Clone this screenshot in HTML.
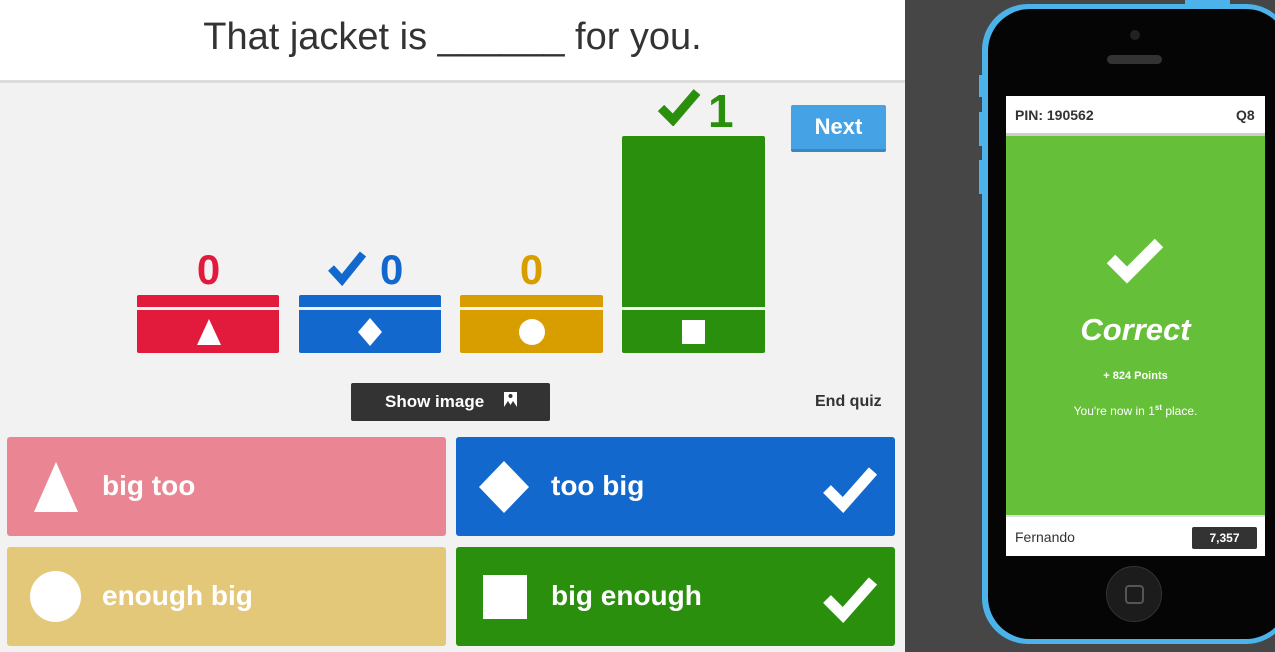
<!DOCTYPE html>
<html><head><meta charset="utf-8"><style>
*{margin:0;padding:0;box-sizing:border-box}
body{width:1275px;height:652px;overflow:hidden;position:relative;background:#f2f2f2;font-family:"Liberation Sans",sans-serif}
.a{position:absolute}
.num{position:absolute;font-weight:bold;font-size:42px;text-align:center;width:143px;top:246px}
.card{position:absolute;border-radius:3px;color:#fff;font-size:28px;font-weight:bold}
.card span{position:absolute;left:95px;top:33px}
</style></head><body>
<div class="a" style="left:0;top:0;width:905px;height:83px;background:#fff;border-bottom:3px solid #ddd"></div>
<div class="a" style="left:0;top:16px;width:905px;text-align:center;font-size:38px;color:#333">That jacket is ______ for you.</div>

<div class="a" style="left:137px;top:295px;width:142px;height:12px;background:#e21b3c;border-radius:2px 2px 0 0"></div>
<div class="a" style="left:137px;top:310px;width:142px;height:43px;background:#e21b3c;border-radius:0 0 2px 2px"></div>
<svg class="a" style="left:197px;top:319px" width="24" height="26"><polygon points="12,0 24,26 0,26" fill="#fff"/></svg>
<div class="num" style="left:137px;color:#e21b3c">0</div>

<div class="a" style="left:299px;top:295px;width:142px;height:12px;background:#1368ce;border-radius:2px 2px 0 0"></div>
<div class="a" style="left:299px;top:310px;width:142px;height:43px;background:#1368ce;border-radius:0 0 2px 2px"></div>
<svg class="a" style="left:358px;top:318px" width="24" height="28"><polygon points="12,0 24,14 12,28 0,14" fill="#fff"/></svg>
<div class="a" style="left:380px;top:246px;font-size:42px;font-weight:bold;color:#1368ce">0</div>
<svg class="a" style="left:327px;top:250px" width="42" height="36"><path d="M4,18 L15,30 L36,4" stroke="#1368ce" stroke-width="8" fill="none"/></svg>

<div class="a" style="left:460px;top:295px;width:143px;height:12px;background:#d89e00;border-radius:2px 2px 0 0"></div>
<div class="a" style="left:460px;top:310px;width:143px;height:43px;background:#d89e00;border-radius:0 0 2px 2px"></div>
<div class="a" style="left:519px;top:319px;width:26px;height:26px;border-radius:50%;background:#fff"></div>
<div class="num" style="left:460px;color:#d89e00">0</div>

<div class="a" style="left:622px;top:136px;width:143px;height:171px;background:#2b8f0e;border-radius:2px 2px 0 0"></div>
<div class="a" style="left:622px;top:310px;width:143px;height:43px;background:#2b8f0e;border-radius:0 0 2px 2px"></div>
<div class="a" style="left:682px;top:320px;width:23px;height:24px;background:#fff"></div>
<div class="a" style="left:708px;top:84px;font-size:46px;font-weight:bold;color:#2b8f0e">1</div>
<svg class="a" style="left:657px;top:88px" width="46" height="38"><path d="M4,20 L16,32 L40,4" stroke="#2b8f0e" stroke-width="9" fill="none"/></svg>

<div class="a" style="left:791px;top:105px;width:95px;height:47px;background:#45a3e5;border-bottom:3px solid #3a86bd;border-radius:2px;color:#fff;font-weight:bold;font-size:22px;text-align:center;line-height:44px">Next</div>

<div class="a" style="left:351px;top:383px;width:199px;height:38px;background:#333;border-radius:2px;color:#fff;font-weight:bold;font-size:17px;line-height:38px;padding-left:34px">Show image</div>
<svg class="a" style="left:504px;top:392px" width="13" height="15"><path d="M0,0 H13 V15 L9,9 L6.5,13 L4,9 L0,15 Z" fill="#fff"/><circle cx="6.5" cy="4" r="2" fill="#333"/></svg>
<div class="a" style="left:815px;top:393px;font-size:16px;font-weight:bold;color:#333">End quiz</div>

<div class="card" style="left:7px;top:437px;width:439px;height:99px;background:#ea8694"><svg class="a" style="left:24px;top:25px" width="50" height="50"><polygon points="25,0 47,50 3,50" fill="#fff"/></svg><span>big too</span></div>
<div class="card" style="left:456px;top:437px;width:439px;height:99px;background:#1368ce"><svg class="a" style="left:20px;top:22px" width="56" height="56"><polygon points="28,2 53,28 28,54 3,28" fill="#fff"/></svg><span>too big</span><svg class="a" style="left:365px;top:28px" width="60" height="48"><path d="M6,24 L22,40 L52,6" stroke="#fff" stroke-width="11" fill="none"/></svg></div>
<div class="card" style="left:7px;top:547px;width:439px;height:99px;background:#e4c87a"><div class="a" style="left:23px;top:24px;width:51px;height:51px;border-radius:50%;background:#fff"></div><span>enough big</span></div>
<div class="card" style="left:456px;top:547px;width:439px;height:99px;background:#2b8f0e"><div class="a" style="left:27px;top:28px;width:44px;height:44px;background:#fff"></div><span>big enough</span><svg class="a" style="left:365px;top:28px" width="60" height="48"><path d="M6,24 L22,40 L52,6" stroke="#fff" stroke-width="11" fill="none"/></svg></div>

<div class="a" style="left:905px;top:0;width:370px;height:652px;background:#464646"></div>
<div class="a" style="left:1185px;top:0;width:45px;height:6px;background:#4bb3ea"></div>
<div class="a" style="left:979px;top:75px;width:6px;height:22px;background:#4bb3ea"></div>
<div class="a" style="left:979px;top:112px;width:6px;height:34px;background:#4bb3ea"></div>
<div class="a" style="left:979px;top:160px;width:6px;height:34px;background:#4bb3ea"></div>
<div class="a" style="left:982px;top:4px;width:310px;height:640px;background:#4bb3ea;border-radius:46px"></div>
<div class="a" style="left:988px;top:9px;width:300px;height:630px;background:#050505;border-radius:42px"></div>
<div class="a" style="left:1130px;top:30px;width:10px;height:10px;border-radius:50%;background:#222"></div>
<div class="a" style="left:1107px;top:55px;width:55px;height:9px;border-radius:5px;background:#333"></div>
<div class="a" style="left:1106px;top:566px;width:56px;height:56px;border-radius:50%;background:#1c1c1c;border:1px solid #333"></div>
<div class="a" style="left:1125px;top:585px;width:19px;height:19px;border-radius:4px;border:2px solid #555"></div>
<div class="a" style="left:1006px;top:96px;width:259px;height:460px;background:#fff"></div>
<div class="a" style="left:1015px;top:107px;font-size:14px;font-weight:bold;color:#333">PIN: 190562</div>
<div class="a" style="left:1236px;top:107px;font-size:14px;font-weight:bold;color:#333">Q8</div>
<div class="a" style="left:1006px;top:133px;width:259px;height:3px;background:#ccc"></div>
<div class="a" style="left:1006px;top:136px;width:259px;height:379px;background:#66bf39"></div>
<div class="a" style="left:1006px;top:515px;width:259px;height:2px;background:#ddd"></div>
<svg class="a" style="left:1105px;top:235px" width="62" height="50"><path d="M6,24 L22,40 L54,8" stroke="#fff" stroke-width="12" fill="none"/></svg>
<div class="a" style="left:1006px;top:312px;width:259px;text-align:center;color:#fff;font-size:31px;font-weight:bold;font-style:italic">Correct</div>
<div class="a" style="left:1006px;top:370px;width:259px;text-align:center;color:#fff;font-size:11px;font-weight:bold">+ 824 Points</div>
<div class="a" style="left:1006px;top:403px;width:259px;text-align:center;color:#fff;font-size:12px">You're now in 1<sup style="font-size:8px;font-weight:bold">st</sup> place.</div>
<div class="a" style="left:1015px;top:529px;font-size:14px;color:#333">Fernando</div>
<div class="a" style="left:1192px;top:527px;width:65px;height:22px;background:#333;border-radius:2px;color:#fff;font-size:12px;font-weight:bold;text-align:center;line-height:22px">7,357</div>
</body></html>
